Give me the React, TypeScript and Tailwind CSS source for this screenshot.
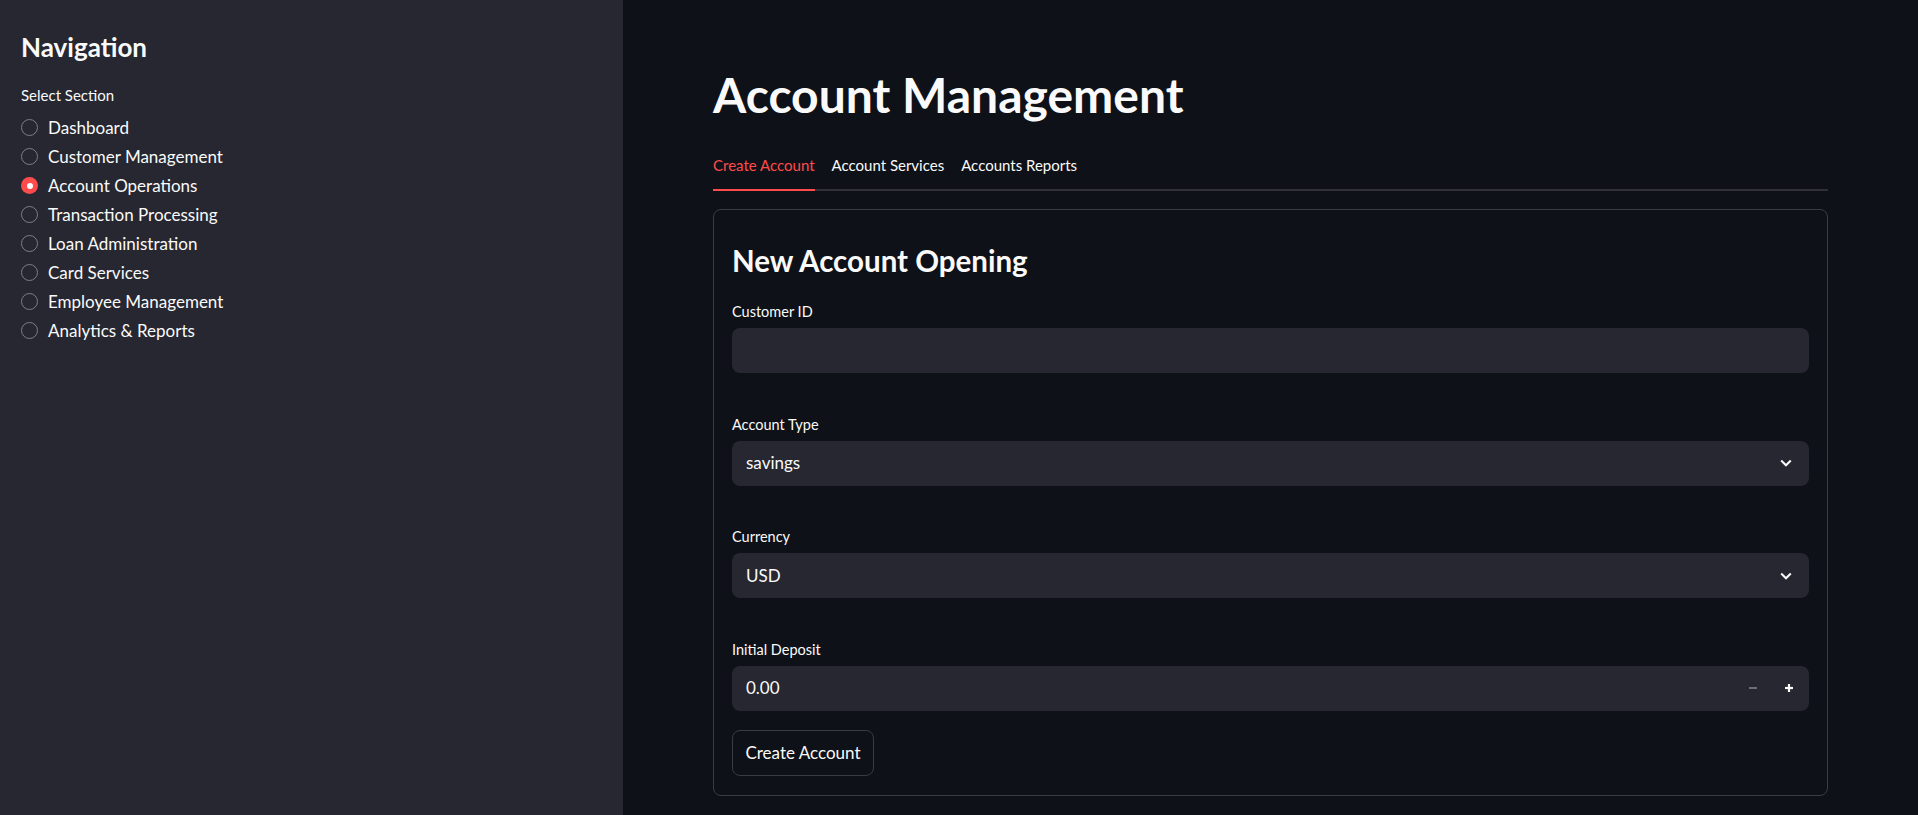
import React from "react";

const sections = [
  "Dashboard",
  "Customer Management",
  "Account Operations",
  "Transaction Processing",
  "Loan Administration",
  "Card Services",
  "Employee Management",
  "Analytics & Reports",
];

const tabs = ["Create Account", "Account Services", "Accounts Reports"];

function Chevron() {
  return (
    <svg width="14" height="14" viewBox="0 0 24 24" fill="none" stroke="#fafafa" strokeWidth="3.5" strokeLinecap="square">
      <polyline points="5 9 12 16 19 9" />
    </svg>
  );
}

function Field({ label, children }: { label: string; children: React.ReactNode }) {
  return (
    <div className="flex flex-col">
      <label className="text-[14.5px] leading-[20px] text-[#fafafa]">{label}</label>
      <div className="mt-[6px]">{children}</div>
    </div>
  );
}

function SelectBox({ value }: { value: string }) {
  return (
    <div className="flex h-[45px] items-center justify-between rounded-[8px] bg-[#262730] pl-[14px] pr-[16px] text-[17px] text-[#fafafa]">
      <span>{value}</span>
      <Chevron />
    </div>
  );
}

export default function App() {
  return (
    <div
      className="flex h-[815px] w-full bg-[#0e1117] text-[#fafafa]"
      style={{ fontFamily: "Lato, 'Noto Sans', sans-serif" }}
    >
      {/* Sidebar */}
      <aside className="w-[623px] shrink-0 bg-[#262730] px-[21px] pt-[32px]">
        <h2 className="text-[26px] font-bold leading-[30px]">Navigation</h2>
        <div className="mt-[23px] text-[15px] leading-[20px]">Select Section</div>
        <div className="mt-[8px] flex flex-col">
          {sections.map((s) => {
            const active = s === "Account Operations";
            return (
              <div key={s} className="flex h-[29px] items-center gap-[10px] text-[17px]">
                {active ? (
                  <span className="flex h-[17px] w-[17px] items-center justify-center rounded-full bg-[#ff4b4b]">
                    <span className="h-[6px] w-[6px] rounded-full bg-white" />
                  </span>
                ) : (
                  <span className="h-[17px] w-[17px] rounded-full border border-[#7d7f88]" />
                )}
                <span>{s}</span>
              </div>
            );
          })}
        </div>
      </aside>

      {/* Main */}
      <main className="flex-1 pl-[90px] pr-[90px] pt-[67px]">
        <h1 className="text-[48px] font-bold leading-[56px]">Account Management</h1>

        <div className="mt-[32px] flex gap-[17px] border-b-2 border-[#2f3038]">
          {tabs.map((t, i) => (
            <div
              key={t}
              className={
                i === 0
                  ? "-mb-[2px] border-b-2 border-[#ff4b4b] pb-[14px] text-[15px] leading-[20px] text-[#ff4b4b]"
                  : "pb-[14px] text-[15px] leading-[20px]"
              }
            >
              {t}
            </div>
          ))}
        </div>

        <div className="mt-[18px] rounded-[8px] border border-[#3a3b43] px-[18px] pb-[19px] pt-[31px]">
          <h3 className="text-[29.5px] font-bold leading-[40px]">New Account Opening</h3>

          <div className="mt-[21px] flex flex-col gap-[41.5px]">
            <Field label="Customer ID">
              <div className="h-[45px] rounded-[8px] bg-[#262730]" />
            </Field>
            <Field label="Account Type">
              <SelectBox value="savings" />
            </Field>
            <Field label="Currency">
              <SelectBox value="USD" />
            </Field>
            <Field label="Initial Deposit">
              <div className="flex h-[45px] items-center justify-between rounded-[8px] bg-[#262730] pl-[14px] pr-[15px] text-[17px]">
                <span>0.00</span>
                <div className="flex items-center gap-[26px]">
                  <svg width="10" height="10" viewBox="0 0 10 10">
                    <line x1="1" y1="5" x2="9" y2="5" stroke="#6c6e78" strokeWidth="2" />
                  </svg>
                  <svg width="10" height="10" viewBox="0 0 10 10">
                    <line x1="1" y1="5" x2="9" y2="5" stroke="#fafafa" strokeWidth="2.2" />
                    <line x1="5" y1="1" x2="5" y2="9" stroke="#fafafa" strokeWidth="2.2" />
                  </svg>
                </div>
              </div>
            </Field>
          </div>

          <button className="mt-[19px] h-[46px] w-[142px] rounded-[8px] border border-[#3a3b43] bg-[#0e1117] text-[17px] text-[#fafafa]">
            Create Account
          </button>
        </div>
      </main>
    </div>
  );
}
